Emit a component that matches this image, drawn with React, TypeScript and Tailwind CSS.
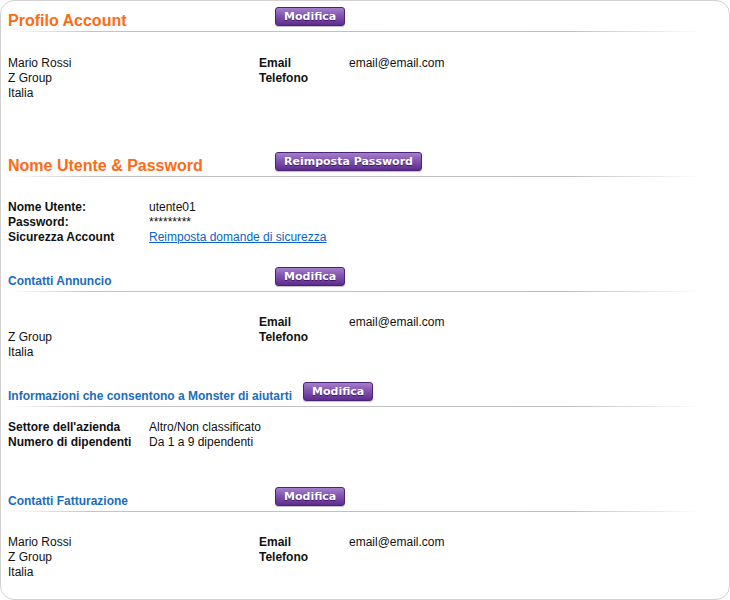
import type { ReactNode } from 'react';

const PurpleButton = ({ label }: { label: string }) => (
  <button
    type="button"
    className="h-[19px] shrink-0 rounded-[3px] border border-[#4a2474] bg-[linear-gradient(to_bottom,#a47fcb_0%,#8254b1_45%,#5e2c8d_100%)] px-[8px] text-[11px] leading-[17px] font-bold text-white [font-family:'DejaVu_Sans',Verdana,sans-serif] [text-shadow:0_1px_0_#3b1861] shadow-[0_1px_1px_rgba(0,0,0,0.25)]"
  >
    {label}
  </button>
);

const SectionHeader = ({
  title,
  button,
  big,
  wide,
}: {
  title: string;
  button: string;
  big?: boolean;
  wide?: boolean;
}) => (
  <div>
    <div className="flex items-end gap-[11px]">
      <h2
        className={
          big
            ? 'min-w-[256px] -mb-[3px] text-[16px] leading-none font-bold text-[#ff6a13]'
            : wide
              ? '-mb-px text-[12px] leading-none font-bold text-[#1c6cbc]'
              : 'min-w-[256px] -mb-px text-[12px] leading-none font-bold text-[#1c6cbc]'
        }
      >
        {title}
      </h2>
      <PurpleButton label={button} />
    </div>
    <div className="mt-[5px] h-px w-[695px] bg-[linear-gradient(to_right,rgba(190,190,190,0)_0%,#c4c4c4_12%,#bdbdbd_80%,rgba(190,190,190,0)_100%)]" />
  </div>
);

const Lines = ({ children }: { children: ReactNode }) => (
  <div className="flex flex-col">{children}</div>
);

const ContactBlock = ({ name }: { name?: string }) => (
  <div className="flex">
    <div className="w-[251px]">
      <Lines>
        <div className="h-[15px]">{name ?? ''}</div>
        <div className="h-[15px]">Z Group</div>
        <div className="h-[15px]">Italia</div>
      </Lines>
    </div>
    <div className="flex flex-col">
      <div className="flex h-[15px]">
        <span className="w-[90px] font-bold">Email</span>
        <span>email@email.com</span>
      </div>
      <div className="flex h-[15px]">
        <span className="w-[90px] font-bold">Telefono</span>
        <span></span>
      </div>
    </div>
  </div>
);

const LabelRow = ({ label, children }: { label: string; children: ReactNode }) => (
  <div className="flex h-[15px]">
    <span className="w-[141px] font-bold">{label}</span>
    <span>{children}</span>
  </div>
);

export default function App() {
  return (
    <div className="h-[600px] w-[730px] bg-white">
      <div className="h-[600px] w-[730px] rounded-[14px] border border-[#d2d2d2] bg-white pt-[6px] pl-[7px] text-[12px] leading-[15px] text-[#111] [font-family:'Liberation_Sans',Arial,sans-serif]">
        {/* Profilo Account */}
        <SectionHeader title="Profilo Account" button="Modifica" big />
        <div className="mt-[24px]">
          <ContactBlock name="Mario Rossi" />
        </div>

        {/* Nome Utente & Password */}
        <div className="mt-[51px]">
          <SectionHeader title="Nome Utente & Password" button="Reimposta Password" big />
        </div>
        <div className="mt-[23px] flex flex-col">
          <LabelRow label="Nome Utente:">utente01</LabelRow>
          <LabelRow label="Password:">*********</LabelRow>
          <LabelRow label="Sicurezza Account">
            <a href="#" className="text-[#0a64c2] underline">
              Reimposta domande di sicurezza
            </a>
          </LabelRow>
        </div>

        {/* Contatti Annuncio */}
        <div className="mt-[22px]">
          <SectionHeader title="Contatti Annuncio" button="Modifica" />
        </div>
        <div className="mt-[23px]">
          <ContactBlock />
        </div>

        {/* Informazioni */}
        <div className="mt-[22px]">
          <SectionHeader
            title="Informazioni che consentono a Monster di aiutarti"
            button="Modifica"
            wide
          />
        </div>
        <div className="mt-[13px] flex flex-col">
          <LabelRow label="Settore dell'azienda">Altro/Non classificato</LabelRow>
          <LabelRow label="Numero di dipendenti">Da 1 a 9 dipendenti</LabelRow>
        </div>

        {/* Contatti Fatturazione */}
        <div className="mt-[37px]">
          <SectionHeader title="Contatti Fatturazione" button="Modifica" />
        </div>
        <div className="mt-[23px]">
          <ContactBlock name="Mario Rossi" />
        </div>
      </div>
    </div>
  );
}
